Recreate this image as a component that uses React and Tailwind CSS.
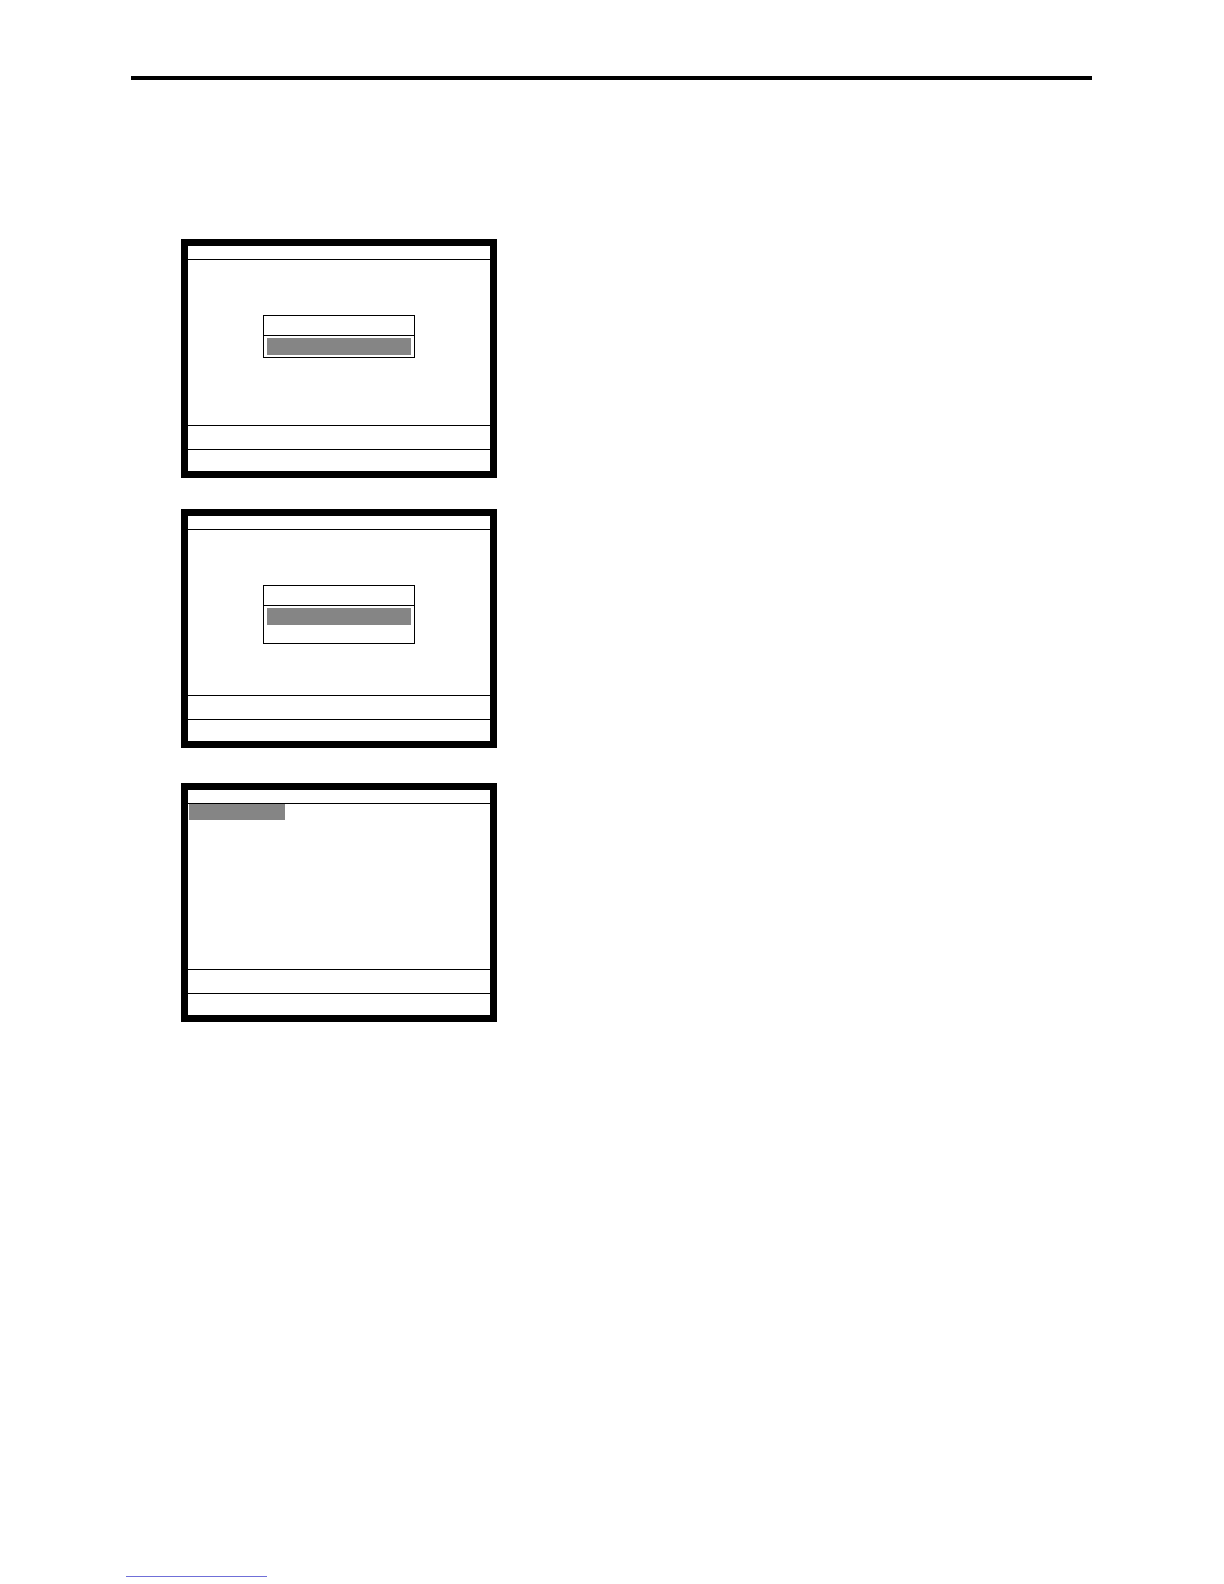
export default function App() {
    return (
        <div className="w-[1224px] h-[1584px] bg-white flex flex-col">
            <div className="pt-[76px] pl-[131px]">
                <div className="w-[961px] h-[4px] bg-black" />
            </div>

            <div className="ml-[181px] mt-[159px] flex flex-col">
                <Screen>
                    <Dialog />
                </Screen>
                <div className="mt-[31px]">
                    <Screen>
                        <Dialog extraRow />
                    </Screen>
                </div>
                <div className="mt-[35px]">
                    <Screen>
                        <div className="ml-[1px] w-[96px] h-[16px] bg-[#858585]" />
                    </Screen>
                </div>
            </div>

            <div className="mt-auto mb-[7px] ml-[126px] w-[141px] h-[1px] bg-[#6f6fd8]" />
        </div>
    );
}

function Screen({ children }) {
    return (
        <div className="w-[316px] h-[239px] border-[7px] border-black flex flex-col bg-white">
            <div className="h-[14px] border-b-[1.5px] border-black shrink-0" />
            <div className="flex-1">{children}</div>
            <div className="h-[24px] border-t-[1.5px] border-black shrink-0" />
            <div className="h-[22px] border-t-[1.5px] border-black shrink-0" />
        </div>
    );
}

function Dialog({ extraRow }) {
    return (
        <div className="ml-[75px] mt-[55px] w-[152px] border-[1.5px] border-black">
            <div className="h-[20px] border-b-[1.5px] border-black" />
            <div className="px-[3px] py-[2px]">
                <div className="h-[17px] bg-[#858585]" />
            </div>
            {extraRow && <div className="h-[16px]" />}
        </div>
    );
}
